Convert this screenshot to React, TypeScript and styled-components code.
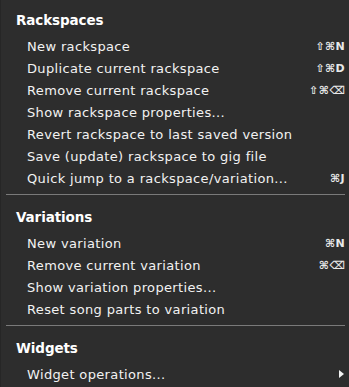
import React from "react";
import styled, { createGlobalStyle } from "styled-components";

const Global = createGlobalStyle`
  html, body { margin: 0; padding: 0; background: #2d2d2d; }
  body { font-family: "DejaVu Sans", Verdana, sans-serif; }
`;

const Menu = styled.div`
  width: 349px;
  height: 387px;
  box-sizing: border-box;
  background: #2d2d2d;
  padding-top: 9px;
  overflow: hidden;
  border-left: 1px solid #262626;
`;

const Header = styled.div`
  height: 22px;
  line-height: 22px;
  padding-left: 15px;
  margin-bottom: 4px;
  font-size: 13.5px;
  font-weight: bold;
  letter-spacing: -0.1px;
  color: #ffffff;
`;

const Row = styled.div`
  display: flex;
  align-items: center;
  justify-content: space-between;
  height: 22px;
  padding-left: 26px;
  padding-right: 4px;
  color: #f2f2f2;
  font-size: 13px;
  letter-spacing: 0.35px;
`;

const Shortcut = styled.span`
  font-size: 11px;
  font-weight: bold;
  color: #e8e8e8;
  letter-spacing: 0.3px;
`;

const Separator = styled.div`
  height: 1px;
  background: #7a7a7a;
  margin: 5px 4px 11px 5px;
`;

const Arrow = styled.span`
  width: 0;
  height: 0;
  border-top: 4px solid transparent;
  border-bottom: 4px solid transparent;
  border-left: 5px solid #f2f2f2;
  margin-right: 1px;
`;

type Item = { label: string; shortcut?: string; sub?: boolean };

const sections: { title: string; items: Item[] }[] = [
  {
    title: "Rackspaces",
    items: [
      { label: "New rackspace", shortcut: "⇧⌘N" },
      { label: "Duplicate current rackspace", shortcut: "⇧⌘D" },
      { label: "Remove current rackspace", shortcut: "⇧⌘⌫" },
      { label: "Show rackspace properties..." },
      { label: "Revert rackspace to last saved version" },
      { label: "Save (update) rackspace to gig file" },
      { label: "Quick jump to a rackspace/variation...", shortcut: "⌘J" },
    ],
  },
  {
    title: "Variations",
    items: [
      { label: "New variation", shortcut: "⌘N" },
      { label: "Remove current variation", shortcut: "⌘⌫" },
      { label: "Show variation properties..." },
      { label: "Reset song parts to variation" },
    ],
  },
  {
    title: "Widgets",
    items: [{ label: "Widget operations...", sub: true }],
  },
];

export default function App() {
  return (
    <>
      <Global />
      <Menu>
        {sections.map((s, i) => (
          <React.Fragment key={s.title}>
            {i > 0 && <Separator />}
            <Header>{s.title}</Header>
            {s.items.map((it) => (
              <Row key={it.label}>
                <span>{it.label}</span>
                {it.shortcut && <Shortcut>{it.shortcut}</Shortcut>}
                {it.sub && <Arrow />}
              </Row>
            ))}
          </React.Fragment>
        ))}
      </Menu>
    </>
  );
}
